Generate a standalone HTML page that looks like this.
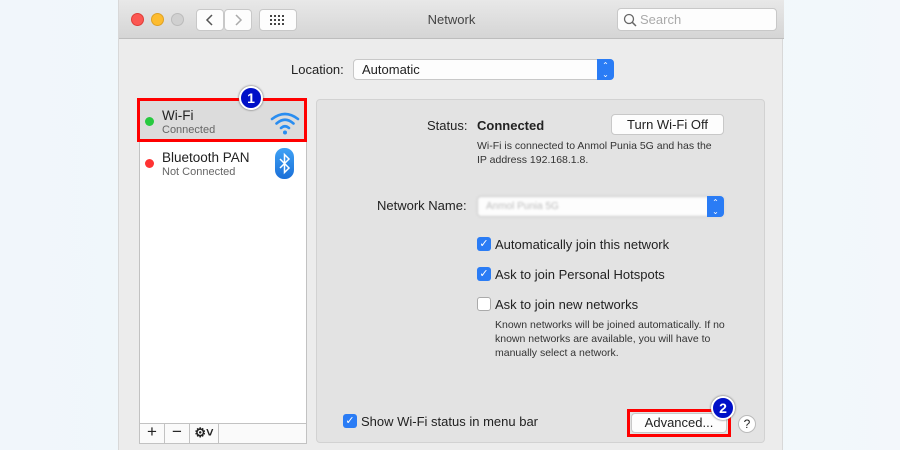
<!DOCTYPE html>
<html><head><style>
*{box-sizing:border-box;margin:0;padding:0}
body{width:900px;height:450px;overflow:hidden;background:linear-gradient(90deg,#f1f6fb,#eefafc 60%,#f3f7fb);font-family:"Liberation Sans",sans-serif;position:relative;font-size:13px;color:#222}
.a{position:absolute}
.win{left:118px;top:0;width:665px;height:450px;background:#ececec;border-left:1px solid #d8d8d8;border-right:1px solid #d8d8d8}
.tb{left:0;top:0;width:665px;height:39px;background:linear-gradient(#e8e8e8,#d5d5d5);border-bottom:1px solid #bdbdbd}
.dot{width:13px;height:13px;border-radius:50%;top:13px}
.btn{background:#fdfdfd;border:1px solid #c8c8c8;border-radius:4px}
.cb{width:14px;height:14px;border-radius:3px;background:#2a7cf5;color:#fff;font-size:11px;line-height:14px;text-align:center}
.cbo{width:14px;height:14px;border-radius:3px;background:#fff;border:1px solid #aaa}
.red{border:3px solid #f00}
.badge{width:24px;height:24px;border-radius:50%;background:#0010c8;border:2px solid #fff;color:#fff;font-weight:bold;font-size:14px;text-align:center;line-height:20px;box-shadow:0 0 2px #555}
.sm{font-size:10.5px;color:#333;line-height:14px}
</style></head><body>
<div class="a win">
 <div class="a tb">
  <div class="a dot" style="left:12px;background:#fc5753;border:1px solid #df3d38"></div>
  <div class="a dot" style="left:32px;background:#fdbc2f;border:1px solid #dea125"></div>
  <div class="a dot" style="left:52px;background:#d0d0d0;border:1px solid #bbb"></div>
  <div class="a btn" style="left:77px;top:9px;width:28px;height:22px"><svg width="26" height="20"><path d="M15 5 L10 10 L15 15" fill="none" stroke="#555" stroke-width="1.5"/></svg></div>
  <div class="a btn" style="left:105px;top:9px;width:28px;height:22px"><svg width="26" height="20"><path d="M11 5 L16 10 L11 15" fill="none" stroke="#aaa" stroke-width="1.5"/></svg></div>
  <div class="a btn" style="left:140px;top:9px;width:38px;height:22px"><svg width="36" height="20" fill="#444"><rect x="10" y="5" width="2" height="2"/><rect x="14" y="5" width="2" height="2"/><rect x="18" y="5" width="2" height="2"/><rect x="22" y="5" width="2" height="2"/><rect x="10" y="9" width="2" height="2"/><rect x="14" y="9" width="2" height="2"/><rect x="18" y="9" width="2" height="2"/><rect x="22" y="9" width="2" height="2"/><rect x="10" y="13" width="2" height="2"/><rect x="14" y="13" width="2" height="2"/><rect x="18" y="13" width="2" height="2"/><rect x="22" y="13" width="2" height="2"/></svg></div>
  <div class="a" style="left:0;width:665px;top:12px;text-align:center;font-size:13px;color:#444">Network</div>
  <div class="a btn" style="left:498px;top:8px;width:160px;height:23px;color:#aaa;padding-left:22px;line-height:21px">Search
   <svg class="a" style="left:5px;top:4px" width="14" height="14"><circle cx="6" cy="6" r="4.5" stroke="#666" stroke-width="1.3" fill="none"/><line x1="9.3" y1="9.3" x2="13" y2="13" stroke="#666" stroke-width="1.5"/></svg></div>
 </div>
 <div class="a" style="left:172px;top:62px">Location:</div>
 <div class="a btn" style="left:234px;top:59px;width:261px;height:21px;padding-left:8px;line-height:19px">Automatic</div>
 <div class="a" style="left:478px;top:59px;width:17px;height:21px;background:#2a7cf5;border-radius:0 4px 4px 0;color:#fff;font-size:8px;text-align:center;line-height:9px;padding-top:2px">&#8963;<br>&#8964;</div>
 <div class="a" style="left:20px;top:98px;width:168px;height:346px;background:#fff;border:1px solid #c2c2c2"></div>
 <div class="a" style="left:21px;top:99px;width:166px;height:42px;background:#dcdcdc"></div>
 <div class="a" style="left:21px;top:423px;width:166px;height:20px;border-top:1px solid #c2c2c2;background:#fafafa"></div>
 <div class="a" style="left:21px;top:423px;width:25px;height:20px;border-right:1px solid #c2c2c2;text-align:center;font-size:17px;line-height:18px">+</div>
 <div class="a" style="left:46px;top:423px;width:25px;height:20px;border-right:1px solid #c2c2c2;text-align:center;font-size:17px;line-height:18px">&minus;</div>
 <div class="a" style="left:71px;top:423px;width:29px;height:20px;border-right:1px solid #c2c2c2;text-align:center;font-size:13px;line-height:20px;font-weight:bold">&#9881;&#709;</div>
 <div class="a" style="left:26px;top:117px;width:9px;height:9px;border-radius:50%;background:#27c93f"></div>
 <div class="a" style="left:43px;top:108px;font-size:13.5px">Wi-Fi</div>
 <div class="a" style="left:43px;top:124px;font-size:11px;color:#666">Connected</div>
 <svg class="a" style="left:150px;top:110px" width="32" height="26"><g fill="none" stroke="#2a8df0" stroke-width="2.6" stroke-linecap="round"><path d="M3 9 Q16 -1 29 9"/><path d="M7.5 13.5 Q16 6 24.5 13.5"/><path d="M12 18 Q16 14.5 20 18"/></g><circle cx="16" cy="22.5" r="2" fill="#2a8df0"/></svg>
 <div class="red a" style="left:18px;top:98px;width:170px;height:44px"></div>
 <div class="a badge" style="left:120px;top:86px">1</div>
 <div class="a" style="left:26px;top:159px;width:9px;height:9px;border-radius:50%;background:#f33"></div>
 <div class="a" style="left:43px;top:150px;font-size:13.5px">Bluetooth PAN</div>
 <div class="a" style="left:43px;top:166px;font-size:11px;color:#666">Not Connected</div>
 <div class="a" style="left:156px;top:148px;width:19px;height:31px;border-radius:9px;background:linear-gradient(#3fa2f5,#1a6fd8)"><svg width="19" height="31"><path d="M5 11 L14 20 L9.5 24.5 V6.5 L14 11 L5 20" fill="none" stroke="#fff" stroke-width="1.5"/></svg></div>
 <div class="a" style="left:197px;top:99px;width:449px;height:344px;background:#e3e3e3;border:1px solid #d2d2d2;border-radius:4px"></div>
 <div class="a" style="left:308px;top:118px">Status:</div>
 <div class="a" style="left:358px;top:118px;font-weight:bold">Connected</div>
 <div class="a btn" style="left:492px;top:114px;width:113px;height:21px;text-align:center;line-height:19px">Turn Wi-Fi Off</div>
 <div class="a sm" style="left:358px;top:139px;width:245px">Wi-Fi is connected to Anmol Punia 5G and has the IP address 192.168.1.8.</div>
 <div class="a" style="left:258px;top:198px">Network Name:</div>
 <div class="a btn" style="left:358px;top:196px;width:247px;height:21px;color:#bbb;padding-left:8px;line-height:19px;font-size:10px;filter:blur(1px)">Anmol Punia 5G</div>
 <div class="a" style="left:588px;top:196px;width:17px;height:21px;background:#2a7cf5;border-radius:0 4px 4px 0;color:#fff;font-size:8px;text-align:center;line-height:9px;padding-top:2px">&#8963;<br>&#8964;</div>
 <div class="a cb" style="left:358px;top:237px">&#10003;</div><div class="a" style="left:376px;top:237px">Automatically join this network</div>
 <div class="a cb" style="left:358px;top:267px">&#10003;</div><div class="a" style="left:376px;top:267px">Ask to join Personal Hotspots</div>
 <div class="a cbo" style="left:358px;top:297px"></div><div class="a" style="left:376px;top:297px">Ask to join new networks</div>
 <div class="a sm" style="left:376px;top:318px;width:236px">Known networks will be joined automatically. If no known networks are available, you will have to manually select a network.</div>
 <div class="a cb" style="left:224px;top:414px">&#10003;</div><div class="a" style="left:242px;top:414px">Show Wi-Fi status in menu bar</div>
 <div class="a btn" style="left:512px;top:413px;width:96px;height:20px;text-align:center;line-height:18px">Advanced...</div>
 <div class="red a" style="left:508px;top:409px;width:104px;height:28px"></div>
 <div class="a badge" style="left:592px;top:396px">2</div>
 <div class="a" style="left:619px;top:415px;width:18px;height:18px;border-radius:50%;background:#fff;border:1px solid #bbb;text-align:center;font-size:12px;line-height:16px">?</div>
</div>
</body></html>
